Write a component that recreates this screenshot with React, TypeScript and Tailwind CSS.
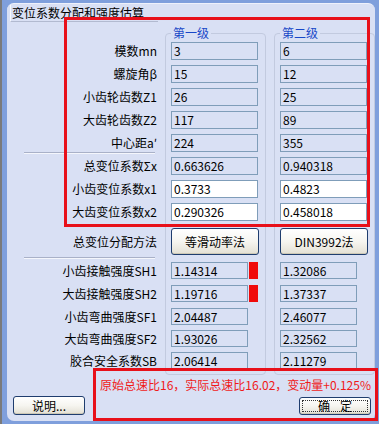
import React from 'react';

const FONT = '"Noto Sans CJK SC", "Noto Sans", sans-serif';

interface Row {
  label: string;
  v1: string;
  v2: string;
  editable?: boolean;
}

interface StrengthRow {
  label: string;
  v1: string;
  v2: string;
  warn?: boolean;
  gap: string;
}

const gearRows: Row[] = [
  { label: '模数mn', v1: '3', v2: '6' },
  { label: '螺旋角β', v1: '15', v2: '12' },
  { label: '小齿轮齿数Z1', v1: '26', v2: '25' },
  { label: '大齿轮齿数Z2', v1: '117', v2: '89' },
  { label: '中心距a′', v1: '224', v2: '355' },
];

const shiftRows: Row[] = [
  { label: '总变位系数Σx', v1: '0.663626', v2: '0.940318' },
  { label: '小齿变位系数x1', v1: '0.3733', v2: '0.4823', editable: true },
  { label: '大齿变位系数x2', v1: '0.290326', v2: '0.458018', editable: true },
];

// tops: 262, 285, 308, 330, 352
const strengthRows: StrengthRow[] = [
  { label: '小齿接触强度SH1', v1: '1.14314', v2: '1.32086', warn: true, gap: '' },
  { label: '大齿接触强度SH2', v1: '1.19716', v2: '1.37337', warn: true, gap: 'mt-[6px]' },
  { label: '小齿弯曲强度SF1', v1: '2.04487', v2: '2.46077', gap: 'mt-[6px]' },
  { label: '大齿弯曲强度SF2', v1: '1.93026', v2: '2.32562', gap: 'mt-[5px]' },
  { label: '胶合安全系数SB', v1: '2.06414', v2: '2.11279', gap: 'mt-[5px]' },
];

const Field = ({ value, editable, className }: { value: string; editable?: boolean; className: string }) => (
  <div
    className={`${className} flex items-center border border-[#7f9db9] pl-[2px] text-[12px] leading-none text-black ${
      editable ? 'bg-white' : 'bg-[#d9e0f4]'
    }`}
  >
    {value}
  </div>
);

const XPButton = ({ children, className }: { children: React.ReactNode; className: string }) => (
  <button
    className={`${className} flex items-center justify-center rounded-[3px] border border-[#1f3d6e] bg-linear-to-b from-white via-[#f6f5f0] to-[#e3e0d4] text-[12px] leading-none text-black shadow-[inset_0_-1px_0_#cdc8b6]`}
  >
    {children}
  </button>
);

const Separator = ({ className }: { className: string }) => (
  <div className={className}>
    <div className="ml-[17px] h-px w-[131px] bg-[#a9b1c8]" />
    <div className="ml-[17px] h-px w-[131px] bg-[#f4f6fc]" />
  </div>
);

const Label = ({ text, className }: { text: string; className: string }) => (
  <div className={`${className} flex items-center justify-end whitespace-nowrap pr-[8px] text-[12px] leading-none`}>
    {text}
  </div>
);

const GroupColumn = ({ title, col, method }: { title: string; col: 1 | 2; method: string }) => (
  <fieldset className="rounded-[4px] border border-[#c2cadf] pb-[5px] pl-[5px] pr-[6px] pt-[2px]">
    <legend className="px-[2px] text-[12px] leading-[14px] text-[#1848c8]">{title}</legend>
    {gearRows.map((r, i) => (
      <Field key={r.label} value={col === 1 ? r.v1 : r.v2} className={`h-[18px] w-[87px] ${i ? 'mt-[5px]' : ''}`} />
    ))}
    <div className="h-[5px]" />
    {shiftRows.map((r, i) => (
      <Field
        key={r.label}
        value={col === 1 ? r.v1 : r.v2}
        editable={r.editable}
        className={`h-[18px] w-[87px] ${i ? 'mt-[5px]' : ''}`}
      />
    ))}
    <XPButton className="mt-[7px] h-[27px] w-[88px]">{method}</XPButton>
    <div className="h-[7px]" />
    {strengthRows.map((r) => (
      <div key={r.label} className={`flex h-[17px] items-stretch gap-[1px] ${r.gap}`}>
        <Field value={col === 1 ? r.v1 : r.v2} className="h-[17px] w-[77px]" />
        {col === 1 && r.warn && <div className="w-[9px] bg-[#f00a0a]" />}
      </div>
    ))}
  </fieldset>
);

export default function App() {
  return (
    <div
      className="relative h-[424px] w-[379px] overflow-hidden border-l-2 border-[#7a7a7a] bg-[#7f9fdc] text-black"
      style={{ fontFamily: FONT }}
    >
      <div className="ml-[5px] mt-[3px] h-[418px] w-[368px] rounded-[7px] border-t border-[#eef1fb] bg-[#d9e0f4]">
        {/* title tab */}
        <div className="ml-[3px] mt-[1px] flex h-[17px] w-[148px] items-center border-b border-l border-b-[#b2bad0] border-l-[#f6f8fd] pl-[1px] text-[12px] leading-none">
          变位系数分配和强度估算
        </div>

        <div className="mt-[4px] flex items-start">
          {/* labels */}
          <div className="flex w-[158px] shrink-0 flex-col pt-[16px]">
            {gearRows.map((r, i) => (
              <Label key={r.label} text={r.label} className={`h-[18px] ${i ? 'mt-[5px]' : ''}`} />
            ))}
            <Separator className="h-[5px]" />
            {shiftRows.map((r, i) => (
              <Label key={r.label} text={r.label} className={`h-[18px] ${i ? 'mt-[5px]' : ''}`} />
            ))}
            <Label text="总变位分配方法" className="mt-[7px] h-[27px]" />
            <Separator className="h-[7px] pt-[2px]" />
            {strengthRows.map((r) => (
              <Label key={r.label} text={r.label} className={`h-[17px] ${r.gap}`} />
            ))}
          </div>

          <GroupColumn title="第一级" col={1} method="等滑动率法" />
          <div className="w-[8px] shrink-0" />
          <GroupColumn title="第二级" col={2} method="DIN3992法" />
        </div>

        {/* footer */}
        <div className="mt-[3px] flex h-[14px] items-center justify-end pr-[4px] text-[12px] leading-none text-[#f01a1a]">
          原始总速比16，实际总速比16.02，变动量+0.125%
        </div>
        <div className="mt-[4px] flex items-start justify-between pl-[6px] pr-[4px]">
          <XPButton className="h-[19px] w-[72px]">说明...</XPButton>
          <XPButton className="mt-[1px] h-[18px] w-[72px] gap-[10px] outline-1 -outline-offset-4 outline-dotted outline-[#333]">
            <span>确</span>
            <span>定</span>
          </XPButton>
        </div>
      </div>

      {/* red annotation frames */}
      <div className="pointer-events-none absolute left-[62px] top-[17px] h-[210px] w-[306px] border-[3px] border-[#e8101a]" />
      <div className="pointer-events-none absolute left-[91px] top-[368px] h-[53px] w-[285px] border-[3px] border-[#e8101a]" />
    </div>
  );
}
